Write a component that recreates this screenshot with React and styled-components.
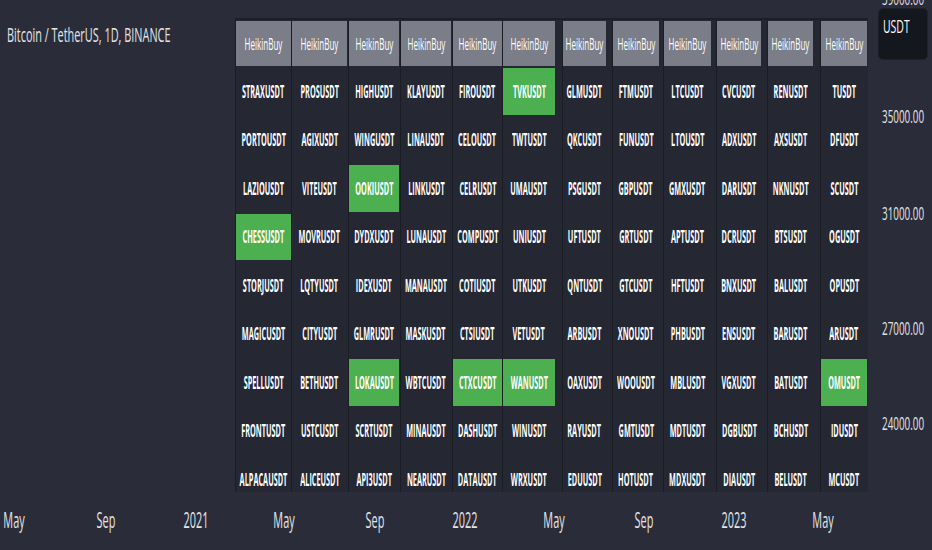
import React from 'react';
import styled, { createGlobalStyle } from 'styled-components';

const GlobalStyle = createGlobalStyle`
  html, body {
    margin: 0;
    padding: 0;
    background: #2a2d39;
  }
  body {
    font-family: "Open Sans", "Liberation Sans", sans-serif;
    color: #ffffff;
  }
`;

const columns = [
  { w: 56, trim: 0, cells: ['STRAXUSDT', 'PORTOUSDT', 'LAZIOUSDT', 'CHESSUSDT', 'STORJUSDT', 'MAGICUSDT', 'SPELLUSDT', 'FRONTUSDT', 'ALPACAUSDT'] },
  { w: 57, trim: 1, cells: ['PROSUSDT', 'AGIXUSDT', 'VITEUSDT', 'MOVRUSDT', 'LQTYUSDT', 'CITYUSDT', 'BETHUSDT', 'USTCUSDT', 'ALICEUSDT'] },
  { w: 52, trim: 1, cells: ['HIGHUSDT', 'WINGUSDT', 'OOKIUSDT', 'DYDXUSDT', 'IDEXUSDT', 'GLMRUSDT', 'LOKAUSDT', 'SCRTUSDT', 'API3USDT'] },
  { w: 52, trim: 1, cells: ['KLAYUSDT', 'LINAUSDT', 'LINKUSDT', 'LUNAUSDT', 'MANAUSDT', 'MASKUSDT', 'WBTCUSDT', 'MINAUSDT', 'NEARUSDT'] },
  { w: 50, trim: 0, cells: ['FIROUSDT', 'CELOUSDT', 'CELRUSDT', 'COMPUSDT', 'COTIUSDT', 'CTSIUSDT', 'CTXCUSDT', 'DASHUSDT', 'DATAUSDT'] },
  { w: 60, trim: 7, cells: ['TVKUSDT', 'TWTUSDT', 'UMAUSDT', 'UNIUSDT', 'UTKUSDT', 'VETUSDT', 'WANUSDT', 'WINUSDT', 'WRXUSDT'] },
  { w: 50, trim: 6, cells: ['GLMUSDT', 'QKCUSDT', 'PSGUSDT', 'UFTUSDT', 'QNTUSDT', 'ARBUSDT', 'OAXUSDT', 'RAYUSDT', 'EDUUSDT'] },
  { w: 51, trim: 4, cells: ['FTMUSDT', 'FUNUSDT', 'GBPUSDT', 'GRTUSDT', 'GTCUSDT', 'XNOUSDT', 'WOOUSDT', 'GMTUSDT', 'HOTUSDT'] },
  { w: 53, trim: 5, cells: ['LTCUSDT', 'LTOUSDT', 'GMXUSDT', 'APTUSDT', 'HFTUSDT', 'PHBUSDT', 'MBLUSDT', 'MDTUSDT', 'MDXUSDT'] },
  { w: 51, trim: 6, cells: ['CVCUSDT', 'ADXUSDT', 'DARUSDT', 'DCRUSDT', 'BNXUSDT', 'ENSUSDT', 'VGXUSDT', 'DGBUSDT', 'DIAUSDT'] },
  { w: 53, trim: 7, cells: ['RENUSDT', 'AXSUSDT', 'NKNUSDT', 'BTSUSDT', 'BALUSDT', 'BARUSDT', 'BATUSDT', 'BCHUSDT', 'BELUSDT'] },
  { w: 48, trim: 1, cells: ['TUSDT', 'DFUSDT', 'SCUSDT', 'OGUSDT', 'OPUSDT', 'ARUSDT', 'OMUSDT', 'IDUSDT', 'MCUSDT'] },
];

const buys = new Set(['TVKUSDT', 'OOKIUSDT', 'CHESSUSDT', 'LOKAUSDT', 'CTXCUSDT', 'WANUSDT', 'OMUSDT']);

const prices = [
  { label: '39000.00', top: -2 },
  { label: '35000.00', top: 116 },
  { label: '31000.00', top: 213 },
  { label: '27000.00', top: 328 },
  { label: '24000.00', top: 423 },
];

const dates = [
  { label: 'May', left: 14 },
  { label: 'Sep', left: 106 },
  { label: '2021', left: 196 },
  { label: 'May', left: 284 },
  { label: 'Sep', left: 375 },
  { label: '2022', left: 465 },
  { label: 'May', left: 554 },
  { label: 'Sep', left: 644 },
  { label: '2023', left: 734 },
  { label: 'May', left: 823 },
];

function App() {
  const rows = columns[0].cells.map((_, r) => columns.map((c) => ({ name: c.cells[r], trim: c.trim })));

  return (
    <>
      <GlobalStyle />
      <Screen>
        <Pane>
          <Legend>
            <Squeeze $k={0.545} $origin="left">Bitcoin / TetherUS, 1D, BINANCE</Squeeze>
          </Legend>
          <Table $cols={columns.map((c) => `${c.w}px`).join(' ')}>
            {columns.map((c, i) => (
              <Cell key={`h${i}`}>
                <Fill $trim={c.trim} $tone="head">
                  <HeadText>HeikinBuy</HeadText>
                </Fill>
              </Cell>
            ))}
            {rows.map((row, r) =>
              row.map((cell) => (
                <Cell key={`${r}-${cell.name}`}>
                  <Fill $trim={cell.trim} $tone={buys.has(cell.name) ? 'buy' : 'none'}>
                    <SymbolText>{cell.name}</SymbolText>
                  </Fill>
                </Cell>
              ))
            )}
          </Table>
        </Pane>

        <PriceScale>
          {prices.map((p) => (
            <PriceTick key={p.label} style={{ top: p.top }}>
              <Squeeze $k={0.52} $origin="left">{p.label}</Squeeze>
            </PriceTick>
          ))}
          <Currency>
            <Squeeze $k={0.55} $origin="left">USDT</Squeeze>
          </Currency>
        </PriceScale>

        <TimeScale>
          {dates.map((d, i) => (
            <TimeTick key={i} style={{ left: d.left }}>
              <Squeeze $k={0.52}>{d.label}</Squeeze>
            </TimeTick>
          ))}
        </TimeScale>
      </Screen>
    </>
  );
}

const Screen = styled.div`
  width: 932px;
  height: 550px;
  display: grid;
  grid-template-columns: 877px 55px;
  grid-template-rows: 492px 58px;
  background: #2a2d39;
  overflow: hidden;
`;

const Pane = styled.div`
  display: flex;
  justify-content: space-between;
  align-items: flex-start;
  padding: 0 9px 0 7px;
  overflow: hidden;
`;

const Squeeze = styled.span`
  display: inline-block;
  white-space: nowrap;
  transform: scaleX(${(p) => p.$k});
  transform-origin: ${(p) => p.$origin || 'center'};
`;

const Legend = styled.div`
  flex: 1 1 0;
  min-width: 0;
  margin-top: 23px;
  font-size: 20px;
  line-height: 24px;
  color: #e3e4e8;
  white-space: nowrap;
`;

const Table = styled.div`
  flex-shrink: 0;
  margin-top: 18px;
  display: grid;
  grid-template-columns: ${(p) => p.$cols};
  grid-template-rows: 47px;
  grid-auto-rows: 48.5px;
  background: #252833;
  border-top: 2px solid #1d1f27;
`;

const Cell = styled.div`
  border-left: 1px solid #1b1d25;
  display: flex;
  align-items: stretch;
  justify-content: flex-start;
  min-width: 0;
`;

const tones = {
  head: '#7b7e89',
  buy: '#4caf50',
  none: 'transparent',
};

const Fill = styled.div`
  width: calc(100% - ${(p) => p.$trim}px);
  margin: 1px 0;
  background: ${(p) => tones[p.$tone]};
  display: flex;
  align-items: center;
  justify-content: center;
`;

const HeadText = styled(Squeeze).attrs({ $k: 0.52 })`
  font-size: 15.5px;
  font-weight: 400;
  color: #ffffff;
`;

const SymbolText = styled(Squeeze).attrs({ $k: 0.43 })`
  font-size: 17px;
  font-weight: 700;
  color: #ffffff;
`;

const PriceScale = styled.div`
  position: relative;
  grid-row: 1 / 3;
  grid-column: 2;
`;

const PriceTick = styled.div`
  position: absolute;
  left: 5px;
  transform: translateY(-50%);
  font-size: 19px;
  line-height: 22px;
  color: #e3e4e8;
`;

const Currency = styled.div`
  position: absolute;
  top: 8px;
  left: 1px;
  width: 50px;
  height: 52px;
  box-sizing: border-box;
  padding: 6px 0 0 4px;
  border-radius: 5px;
  background: #15171f;
  border: 1px solid #1f222b;
  font-size: 19px;
  line-height: 22px;
  color: #ffffff;
`;

const TimeScale = styled.div`
  position: relative;
  grid-row: 2;
  grid-column: 1;
`;

const TimeTick = styled.div`
  position: absolute;
  top: 16px;
  transform: translateX(-50%);
  font-size: 21px;
  line-height: 24px;
  color: #e3e4e8;
`;

export default App;
